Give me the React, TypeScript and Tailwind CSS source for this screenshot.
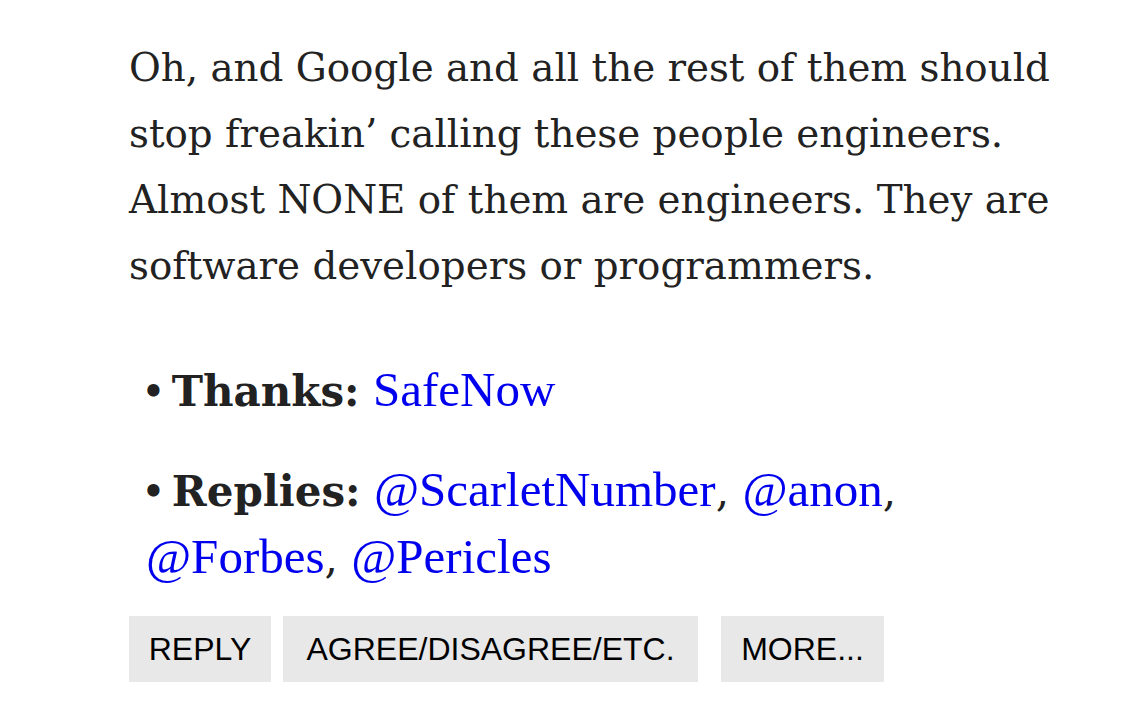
import React from 'react'

const links = "text-[#0000ee] font-['Liberation_Serif',serif] text-[49px]"
const btn = "h-[66px] bg-[#e8e8e8] flex items-center justify-center font-['Liberation_Sans',sans-serif] text-[32px] text-black whitespace-nowrap"

function App() {
    return (
        <div className="w-[1125px] h-[709px] bg-white overflow-hidden">
            <div className="pl-[129px] pt-[35px]">
                {/* Comment body */}
                <p className="font-['DejaVu_Serif',serif] text-[38.8px] leading-[66px] text-[#222] whitespace-nowrap">
                    Oh, and Google and all the rest of them should<br />
                    stop freakin’ calling these people engineers.<br />
                    Almost NONE of them are engineers. They are<br />
                    software developers or programmers.
                </p>

                {/* Meta list */}
                <ul className="mt-[58px] pl-[17px] text-[#222] text-[42px] leading-[65px] font-['DejaVu_Serif',serif]">
                    <li>
                        <span className="-ml-[5px] mr-[6px]">•</span><b>Thanks:</b> <a className={links}>SafeNow</a>
                    </li>
                    <li className="mt-[33px]">
                        <span className="-ml-[5px] mr-[6px]">•</span><b>Replies:</b>{' '}
                        <a className={links}>@ScarletNumber</a>,{' '}
                        <a className={links}>@anon</a>,<br />
                        <a className={links}>@Forbes</a>,{' '}
                        <a className={links}>@Pericles</a>
                    </li>
                </ul>

                {/* Actions */}
                <div className="mt-[25px] flex items-center">
                    <button className={`${btn} w-[142px]`}>REPLY</button>
                    <button className={`${btn} ml-[12px] w-[415px]`}>AGREE/DISAGREE/ETC.</button>
                    <button className={`${btn} ml-[23px] w-[163px]`}>MORE...</button>
                </div>
            </div>
        </div>
    )
}

export default App
